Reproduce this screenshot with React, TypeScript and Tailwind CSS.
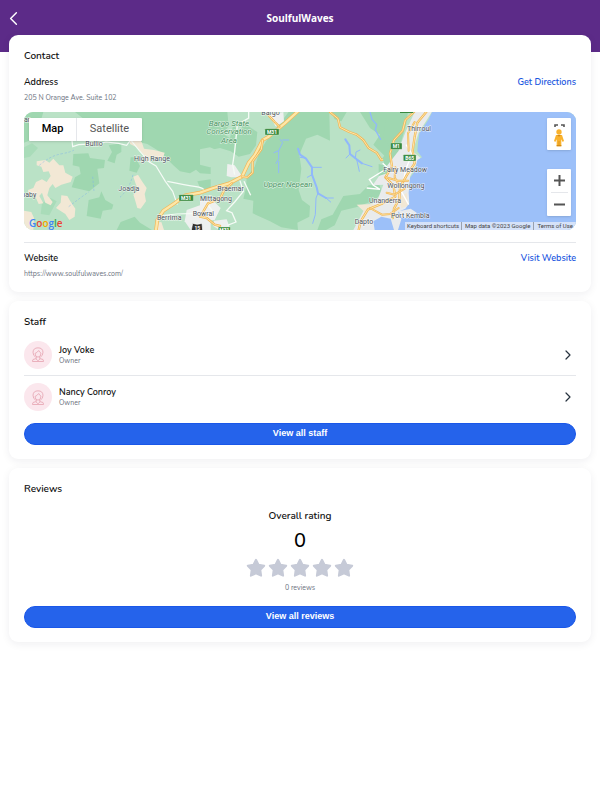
import type { ReactNode } from "react";
import { ChevronLeft, ChevronRight } from "lucide-react";

const park = "#9fd7b0";
const sand = "#f2e8d5";
const water = "#90b8fb";

function Road({ d, width = 9 }: { d: string; width?: number }) {
  return (
    <g fill="none" strokeLinejoin="round" strokeLinecap="round">
      <path d={d} stroke="#f2b657" strokeWidth={width} />
      <path d={d} stroke="#fde7a8" strokeWidth={width - 4} />
    </g>
  );
}

function Shield({ x, y, w, label }: { x: number; y: number; w: number; label: string }) {
  return (
    <g>
      <rect x={x} y={y} width={w} height={19} rx={2} fill="#38893f" stroke="#e7f3df" strokeWidth={1} />
      <text x={x + w / 2} y={y + 15} fill="#fff" fontSize={15} fontWeight={700} textAnchor="middle">
        {label}
      </text>
    </g>
  );
}

function Place({ x, y, children }: { x: number; y: number; children: ReactNode }) {
  return (
    <text x={x} y={y} fill="#4c525a" stroke="#ffffff" strokeWidth={3} strokeOpacity={0.8} paintOrder="stroke" fontSize={21}>
      {children}
    </text>
  );
}

function MapDrawing() {
  return (
    <svg
      viewBox="12 12 1656 354"
      preserveAspectRatio="xMidYMid slice"
      className="block h-full w-full font-[Roboto,sans-serif]"
      role="img"
      aria-label="Map of the surrounding area"
    >
      <rect x={0} y={0} width={1700} height={380} fill="#bae2c6" />

      {/* western bushland */}
      <g>
        <path fill={park} d="M150 0H572V198L540 196 528 185 510 196 480 190 460 172 438 150 425 134 382 108 340 98 300 86 260 62 200 40Z" />
        <path fill={park} d="M12 12H70L62 40 40 52 28 98 12 104Z" />
        <path fill={park} d="M160 138 205 136 210 150 255 156 252 180 232 182 238 226 208 250 155 238 165 208 182 198 178 176 158 172Z" />
        <path fill={park} d="M266 112 304 106 304 132 290 140 284 166 262 158 276 132Z" />
        <path fill={park} d="M206 276 238 268 244 250 256 276 280 290 276 304 248 308 242 332 200 324Z" />
        <path fill={park} d="M332 148 346 148 360 174 350 194 328 188Z" />
        <path fill={park} d="M290 366 302 342 344 326 360 344 396 366Z" />
        <path fill={park} d="M532 220 572 214V246L540 240Z" />
        <path fill="#a9dcb9" d="M12 118 36 106 54 120 30 146 12 150ZM66 286 92 270 110 280 88 322 62 318Z" />
        <path fill={sand} d="M50 160 76 156 88 164 100 152 118 172 130 172 136 194 158 206 152 222 124 230 106 240 98 228 88 240 82 262 98 282 92 292 76 284 66 254 58 264 70 286 56 288 44 262 26 262 24 246 40 240 48 222 66 214 80 222 92 204 86 190 70 192 64 176 50 172Z" />
        <path fill={sand} d="M124 262 142 264 150 278 166 302 164 326 148 336 136 318 108 300 122 284Z" />
        <path fill={sand} d="M12 308 34 312 42 330 40 366H12Z" />
        <path fill={sand} d="M328 92 354 88 366 104 372 122 402 126 434 134 428 152 408 154 392 142 390 166 376 146 350 118 330 108Z" />
        <path fill={sand} d="M340 206 354 200 366 220 380 240 374 258 378 280 362 302 352 300 344 272 340 260 356 246 348 230Z" />
        <path fill={sand} d="M406 344 424 342 432 366H404Z" />
        <path fill="#eef0ef" d="M500 306 540 292 572 288V366H512L494 340Z" />
        <path fill="none" stroke="#7fb2e8" strokeWidth={1.5} strokeDasharray="7 5" d="M58 172Q90 144 122 138T162 126M218 206 222 250M146 296Q180 270 206 252M300 268Q330 240 340 196" />
        <path fill="none" stroke="#f5fbf6" strokeWidth={3.5} d="M156 98 158 116 176 110 240 106 258 102 296 106 320 112 332 96 358 128 388 162 408 174 436 220 458 250 472 290M442 220Q490 230 528 236T544 258M412 324 470 318 528 316 572 322" />
      </g>

      {/* reserve and dams */}
      <g transform="translate(540 0)">
        <path fill={park} d="M0 12H116L120 40 150 58 172 72 168 112 150 138 116 146 92 130 60 120 42 124 20 150 0 154Z" />
        <path fill="#bae2c6" d="M82 12H120L126 60 114 66 100 50 90 90 70 78 86 54ZM0 124 30 118 54 128 90 134 70 172 30 178 0 170Z" />
        <path fill={park} d="M266 12 226 64 206 88 178 132 164 176 140 208 138 240 130 272 160 278 158 316 210 340 244 358 294 366 292 344 328 326 330 294 306 276 296 246 304 182 298 140 318 92 352 80 390 98 388 12Z" />
        <path fill={park} d="M352 366 364 334 398 320 430 264 480 258 506 232 538 230 548 256 520 278 468 298 424 308 404 352 378 366Z" />
        <path fill={park} d="M394 12H440L424 40 404 34ZM480 12H590V130L554 144 520 110 540 80 510 60Z" />
        <path fill="#eef0ef" d="M82 168 104 172 128 208 94 208 80 204ZM210 20 250 12 252 40 228 56ZM0 270 34 272 62 300 44 336 0 340ZM42 338 80 334 92 366 58 366 40 354Z" />
        <g fill="none" stroke={water} strokeLinecap="round" strokeLinejoin="round">
          <path strokeWidth={6} d="M294 122 300 140 318 152 336 178 336 200 350 238 354 256 378 270M436 94 448 112 450 138 470 154 486 166" />
          <path strokeWidth={3} d="M336 178H364M316 150 300 148M336 200 322 208M354 256 348 270 346 320 338 346M378 270 400 270M378 270 392 282M450 138 438 150M466 152 468 132 480 126M486 166 516 176M470 154 478 190M240 94 248 104 236 128 236 152 228 166M248 96 266 96M236 160 236 194M236 128 222 134" />
          <path strokeWidth={4} d="M510 12 516 34 530 50 526 66 542 94" />
        </g>
        <path fill="none" stroke="#f5fbf6" strokeWidth={4} d="M146 12V30L112 50 104 130 98 170 104 200M120 218 130 250 104 282 80 308 96 314 108 342 82 352M44 318 26 294 30 262M210 22 228 52M132 220 152 262" />
        <Road width={7} d="M390 12 414 32 420 58 448 72 470 80 490 96 506 120 530 134 544 156 562 152" />
        <Road width={11} d="M296 8 254 46 206 86 188 96 164 142 146 164 126 206 88 226 40 240 0 254 -44 262 -74 284 -110 308 -128 336 -132 366" />
        <Road width={7} d="M188 96 184 124 158 160 158 194 142 208 126 206M206 22 224 42 238 56M96 226 74 244 60 272 24 286 10 310 0 326 20 330 44 350 60 354" />
      </g>

      {/* coast and ocean */}
      <g transform="translate(1110 0)">
        <path fill="#e9ebec" d="M76 8H128L86 74 68 130 92 150 74 178 60 206 58 286 40 320 36 366H-110L-80 310-36 272-20 230-52 232-30 200-10 166 28 120 48 68Z" />
        <path fill={park} d="M-10 12H54L48 50 34 100 26 128-14 180-22 150 0 118-20 90ZM-34 168-4 176-8 196-34 204ZM8 60 30 56 32 80 12 96Z" />
        <path fill={sand} d="M-100 290-52 288-40 302-76 312ZM26 270 50 254 54 294 34 300Z" />
        <path fill="#9cc0f9" d="M128 8H570V366H24L34 334 24 312 46 302 58 286 56 254 60 210 74 190 82 156 96 148 82 130 84 104 88 76 116 34Z" />
        <path fill="#9cc0f9" d="M-46 366-50 340-26 326 2 332 12 366Z" />
        <path fill="#e9ebec" d="M26 310 62 302 80 314 62 330 36 330Z" />
        <g fill="none" stroke="#ffffff" strokeWidth={4}>
          <path d="M-22 166-6 180-36 198-62 214-50 232-30 244-70 240M48 110 66 138 48 182 34 250 56 290" />
        </g>
        <Road width={7} d="M112 8 82 44 74 86 68 128 74 166 50 202 30 238 28 272 12 302 8 330" />
        <Road width={7} d="M72 12 46 36 38 68 12 96 0 136 6 176-14 208 10 232 16 266-22 286-66 304-88 340-94 366" />
        <Road width={6} d="M74 42 54 76 56 128M-12 208 24 218 54 218M-60 300-24 320 0 318 26 300M16 178 14 208 30 238M-10 254 14 260 44 242" />
      </g>

      <Place x={12} y={42}>ar</Place>
      <Place x={196} y={114}>Bullio</Place>
      <Place x={342} y={160}>High Range</Place>
      <Place x={295} y={248}>Joadja</Place>
      <Place x={4} y={266}>naby</Place>
      <Place x={411} y={335}>Berrima</Place>
      <Place x={518} y={325}>Bowral</Place>
      <Place x={540} y={280}>Mittagong</Place>
      <Place x={592} y={248}>Braemar</Place>
      <Place x={724} y={20}>Bargo</Place>
      <Place x={1004} y={347}>Dapto</Place>
      <Place x={1047} y={286}>Unanderra</Place>
      <Place x={1090} y={192}>Fairy Meadow</Place>
      <Place x={1102} y={240}>Wollongong</Place>
      <Place x={1113} y={330}>Port Kembla</Place>
      <Place x={1161} y={69}>Thirroul</Place>

      <g fill="#47925f" stroke="#e3f4e7" strokeWidth={3} paintOrder="stroke" fontSize={24} fontStyle="italic" textAnchor="middle">
        <text x={627} y={54}>Bargo State</text>
        <text x={627} y={79}>Conservation</text>
        <text x={627} y={104}>Area</text>
        <text x={804} y={236}>Upper Nepean</text>
      </g>

      <Shield x={477} y={260} w={43} label="M31" />
      <Shield x={735} y={62} w={42} label="M31" />
      <Shield x={595} y={357} w={36} label="M31" />
      <Shield x={1112} y={105} w={34} label="M1" />
      <Shield x={1150} y={140} w={38} label="B65" />
      <rect x={1140} y={8} width={40} height={7} fill="#38893f" />
      <path fill="#33312e" stroke="#fff" strokeWidth={2} d="M518 346Q532 352 546 346L548 366 538 376H524L514 366Z" />
      <text x={532} y={365} fill="#fff" fontSize={15} fontWeight={700} textAnchor="middle">15</text>
    </svg>
  );
}

function Pegman() {
  return (
    <svg viewBox="0 0 34 54" className="h-[18px] w-[12px]" aria-hidden="true">
      <circle cx={17} cy={9} r={8} fill="#f9b22d" />
      <path fill="#f9b22d" d="M8 18H26L32 36 28 39 24 31 24 52H10V31L6 39 2 36Z" />
      <path fill="#d28a16" d="M11 18H23L17 23ZM16 36H18V52H16ZM10 48H24V52H10Z" />
    </svg>
  );
}

function MapPanel() {
  return (
    <div className="relative mt-[10px] h-[118px] overflow-hidden rounded-[9px]">
      <MapDrawing />
      <div className="absolute top-[6px] left-[5px] flex h-[23px] rounded-[1px] bg-white font-[Roboto,sans-serif] text-[11px] shadow-sm">
        <button type="button" className="w-[48px] border-r border-gray-200 font-medium text-black">Map</button>
        <button type="button" className="w-[65px] text-[#565656]">Satellite</button>
      </div>
      <div className="absolute bottom-0 left-[5px] font-['Open_Sans',sans-serif] text-[10px] leading-[14px] font-semibold">
        <span className="text-[#4285f4]">G</span>
        <span className="text-[#ea4335]">o</span>
        <span className="text-[#f2a600]">o</span>
        <span className="text-[#4285f4]">g</span>
        <span className="text-[#34a853]">l</span>
        <span className="text-[#ea4335]">e</span>
      </div>
      <button
        type="button"
        aria-label="Street View and full screen"
        className="absolute top-[6px] right-[5px] flex h-[32px] w-[24px] flex-col items-center rounded-[1px] bg-white pt-[6px] shadow-sm"
      >
        <svg viewBox="0 0 11 3" className="h-[3px] w-[11px]" fill="none" stroke="#555" strokeWidth={1.6} aria-hidden="true">
          <path d="M1 3V1H4M7 1H10V3" />
        </svg>
        <span className="mt-[2px]"><Pegman /></span>
      </button>
      <div className="absolute right-[5px] bottom-[14px] flex h-[47px] w-[24px] flex-col items-center rounded-[1px] bg-white shadow-sm">
        <button type="button" aria-label="Zoom in" className="flex flex-1 items-center">
          <svg viewBox="0 0 22 22" className="size-[11px]" stroke="#555" strokeWidth={4} aria-hidden="true">
            <path d="M0 11H22M11 0V22" />
          </svg>
        </button>
        <div className="h-px w-[17px] bg-gray-200" />
        <button type="button" aria-label="Zoom out" className="flex flex-1 items-center">
          <svg viewBox="0 0 22 22" className="size-[11px]" stroke="#555" strokeWidth={4} aria-hidden="true">
            <path d="M0 11H22" />
          </svg>
        </button>
      </div>
      <div className="absolute right-0 bottom-0 flex h-[8px] items-center divide-x divide-gray-400 bg-[#dbe6f8]/90 font-[Roboto,sans-serif] text-[6px] leading-[8px] text-[#444]">
        <button type="button" className="px-[2px]">Keyboard shortcuts</button>
        <span className="px-[3px]">Map data ©2023 Google</span>
        <a href="#terms" className="px-[3px]">Terms of Use</a>
      </div>
    </div>
  );
}

function Card({ title, children }: { title: string; children: ReactNode }) {
  return (
    <section className="rounded-[9px] bg-white px-[15px] pt-[14px] pb-[14px] shadow-[0_2px_9px_rgba(30,30,60,0.07)]">
      <h2 className="text-[10px] leading-[14px] font-semibold">{title}</h2>
      {children}
    </section>
  );
}

function DetailRow({ label, value, link, href }: { label: string; value: string; link: string; href: string }) {
  return (
    <>
      <div className="flex justify-between text-[9px] leading-[12px] font-semibold">
        <h3>{label}</h3>
        <a href={href} className="text-[#1a56e0]">{link}</a>
      </div>
      <p className="mt-[5px] text-[7px] leading-[9px] text-[#6b7280]">{value}</p>
    </>
  );
}

function Avatar() {
  return (
    <span className="flex size-[28px] items-center justify-center rounded-full bg-[#fbe7ed]">
      <svg viewBox="0 0 36 44" className="h-[15px] w-[12px]" fill="none" stroke="#eab0bc" strokeWidth={3} strokeLinejoin="round" aria-hidden="true">
        <path d="M11 30Q3 26 3 15 4 2 18 2 32 2 33 15 33 26 25 30" />
        <path d="M9 19Q15 17 20 10 23 16 27 18 27 29 18 30 9 29 9 19ZM13 29V34L3 37 1 43H35L33 37 23 34V29M12 35 18 41 24 35" />
      </svg>
    </span>
  );
}

function StaffRow({ name }: { name: string }) {
  return (
    <li className="h-[42px]">
      <a href="#staff" className="flex h-full items-center gap-[7px]">
        <Avatar />
        <span className="flex-1">
          <span className="block text-[9px] leading-[12px] font-semibold">{name}</span>
          <span className="block text-[7px] leading-[10px] text-[#6b7280]">Owner</span>
        </span>
        <ChevronRight className="size-[16px] text-[#27333f]" strokeWidth={1.8} />
      </a>
    </li>
  );
}

function PrimaryButton({ children }: { children: ReactNode }) {
  return (
    <button
      type="button"
      className="block h-[22px] w-full rounded-full border border-[#1a57e8] bg-[#2563eb] font-['Liberation_Sans',sans-serif] text-[9px] font-bold text-white"
    >
      {children}
    </button>
  );
}

function Star() {
  return (
    <svg viewBox="0 0 20 20" className="size-[20px]" fill="#c6cad7" stroke="#c6cad7" strokeWidth={2} strokeLinejoin="round" aria-hidden="true">
      <path d="M10 1.800 12.500 6.800 18.200 7.700 14.300 11.900 15.100 17.700 10 15.300 4.900 17.700 5.700 11.900 1.800 7.700 7.500 6.800Z" />
    </svg>
  );
}

export default function App() {
  return (
    <div className="min-h-screen bg-white pb-4 font-['Nunito',Lato,sans-serif] text-[#111]">
      <header className="h-[52px] bg-[#5c2b88]">
        <div className="grid h-[36px] grid-cols-[1fr_auto_1fr] items-center px-[2px]">
          <button type="button" aria-label="Back" className="justify-self-start text-white">
            <ChevronLeft className="size-[23px]" strokeWidth={1.5} />
          </button>
          <h1 className="font-['Open_Sans',sans-serif] text-[10px] font-bold text-white">SoulfulWaves</h1>
        </div>
      </header>
      <main className="-mt-[17px] flex flex-col gap-[9px] px-[9px]">
        <Card title="Contact">
          <div className="mt-[13px]">
            <DetailRow label="Address" value="205 N Orange Ave. Suite 102" link="Get Directions" href="#directions" />
          </div>
          <MapPanel />
          <div className="mt-[12px] border-t border-gray-200 pt-[9px]">
            <DetailRow label="Website" value="https://www.soulfulwaves.com/" link="Visit Website" href="https://www.soulfulwaves.com/" />
          </div>
        </Card>
        <Card title="Staff">
          <ul className="mt-[5px] mb-[5px] divide-y divide-gray-200">
            <StaffRow name="Joy Voke" />
            <StaffRow name="Nancy Conroy" />
          </ul>
          <PrimaryButton>View all staff</PrimaryButton>
        </Card>
        <Card title="Reviews">
          <div className="mt-[13px] mb-[12px] flex flex-col items-center">
            <h3 className="text-[10px] leading-[14px] font-semibold">Overall rating</h3>
            <p className="mt-[4px] text-[20px] leading-[28px] font-medium text-black">0</p>
            <div className="mt-[3px] flex gap-[2px]" role="img" aria-label="0 of 5 stars">
              <Star />
              <Star />
              <Star />
              <Star />
              <Star />
            </div>
            <p className="mt-[4px] text-[7px] leading-[12px] text-[#6b7280]">0 reviews</p>
          </div>
          <PrimaryButton>View all reviews</PrimaryButton>
        </Card>
      </main>
    </div>
  );
}
